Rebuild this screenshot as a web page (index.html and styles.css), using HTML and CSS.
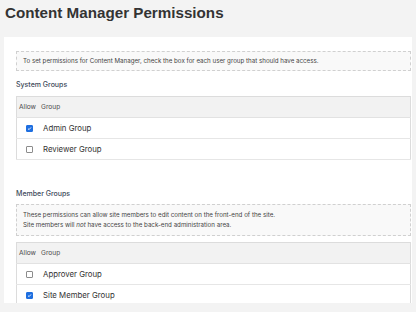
FILE: index.html
```html
<!DOCTYPE html>
<html>
    <head>
        <title>Content Manager Permissions</title>
        <meta charset="UTF-8">
        <link rel="stylesheet" href="styles.css">
    </head>
    <body>
        <h1 class="title">Content Manager Permissions</h1>
        <div class="panel">
            <div class="note">To set permissions for Content Manager, check the box for each user group that should have access.</div>

            <div class="section">System Groups</div>
            <table class="groups">
                <tr><th class="allow">Allow</th><th>Group</th></tr>
                <tr>
                    <td class="allow"><span class="box on"><svg viewBox="0 0 8 8"><path d="M1.6 4.2 L3.3 5.8 L6.4 2.3" fill="none" stroke="#fff" stroke-width="1.4"/></svg></span></td>
                    <td>Admin Group</td>
                </tr>
                <tr>
                    <td class="allow"><span class="box"></span></td>
                    <td>Reviewer Group</td>
                </tr>
            </table>

            <div class="section member">Member Groups</div>
            <div class="note">These permissions can allow site members to edit content on the front-end of the site.<br>
                Site members will <em>not</em> have access to the back-end administration area.</div>
            <table class="groups">
                <tr><th class="allow">Allow</th><th>Group</th></tr>
                <tr>
                    <td class="allow"><span class="box"></span></td>
                    <td>Approver Group</td>
                </tr>
                <tr>
                    <td class="allow"><span class="box on"><svg viewBox="0 0 8 8"><path d="M1.6 4.2 L3.3 5.8 L6.4 2.3" fill="none" stroke="#fff" stroke-width="1.4"/></svg></span></td>
                    <td>Site Member Group</td>
                </tr>
            </table>
        </div>
    </body>
</html>
```

FILE: styles.css
```css
html,body{margin:0; padding:0;}

body{
    background:#f3f3f3;
    font-family:Inter, "Liberation Sans", sans-serif;
    color:#333;
}

.title{
    margin:0;
    height:37px;
    box-sizing:border-box;
    padding:4px 5px 0;
    font-family:"Liberation Sans", Arial, sans-serif;
    font-size:15.2px;
    line-height:18px;
    font-weight:bold;
    color:#333;
}

.panel{
    margin-left:4px;
    margin-right:4px;
    height:266px;
    box-sizing:border-box;
    padding:14px 1px 0 12px;
    background:#fff;
    overflow:hidden;
}

.note{
    border:1px dashed #d0d0d0;
    background:#f9f9f9;
    padding:5px 6px;
    font-size:6.2px;
    line-height:10px;
    color:#444;
}

.panel > .note:first-child{padding:4px 6px;}

.section{
    margin:9px 0 6px;
    font-size:7px;
    line-height:10px;
    font-weight:500;
    color:#3d4a5a;
}

.section.member{margin-top:29px; margin-bottom:5px;}

.note + .groups{margin-top:6px;}

.groups{
    width:100%;
    border-collapse:collapse;
    border:1px solid #dcdcdc;
    font-size:7.8px;
}

.groups th{
    height:20px;
    padding:0 0 0 2px;
    background:#f2f2f2;
    text-align:left;
    font-weight:normal;
    color:#4a4a4a;
    font-size:6.6px;
    border-bottom:1px solid #e2e2e2;
}

.groups td{
    height:20px;
    padding:0 0 0 4px;
    border-bottom:1px solid #e6e6e6;
    color:#333;
}

.groups .allow{width:20px;}

.groups td.allow{text-align:center; padding:0 0 0 2px;}

.box{
    display:inline-block;
    width:7px; height:7px;
    box-sizing:border-box;
    border:1px solid #8c8c8c;
    border-radius:1px;
    background:#fff;
    vertical-align:middle;
}

.box.on{
    border-color:#1f6fe0;
    background:#1f6fe0;
}

.box svg{display:block; width:5px; height:5px;}
```
